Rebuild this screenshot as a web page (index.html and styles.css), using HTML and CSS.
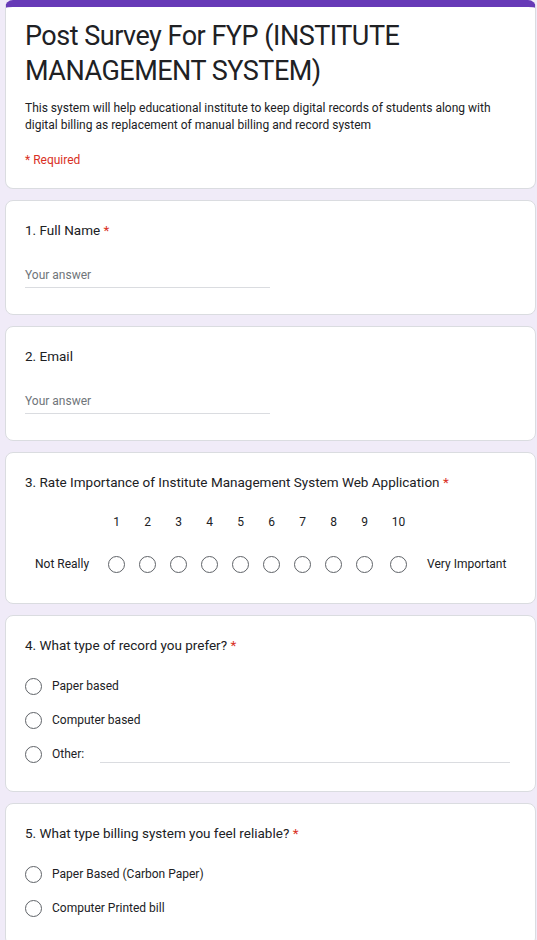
FILE: index.html
```html
<!DOCTYPE html>
<html lang="en">
<head>
<meta charset="utf-8">
<title>Post Survey For FYP (INSTITUTE MANAGEMENT SYSTEM)</title>
<link rel="stylesheet" href="styles.css">
</head>
<body>
<main class="form">
  <section class="card header-card">
    <h1 class="form-title">Post Survey For FYP (INSTITUTE MANAGEMENT SYSTEM)</h1>
    <p class="form-desc">This system will help educational institute to keep digital records of students along with digital billing as replacement of manual billing and record system</p>
    <p class="required-note">* Required</p>
  </section>

  <section class="card">
    <div class="question">1. Full Name <span class="star">*</span></div>
    <div class="text-input">Your answer</div>
  </section>

  <section class="card">
    <div class="question">2. Email</div>
    <div class="text-input">Your answer</div>
  </section>

  <section class="card scale-card">
    <div class="question">3. Rate Importance of Institute Management System Web Application <span class="star">*</span></div>
    <div class="scale">
      <div class="scale-label">Not Really</div>
      <div class="scale-cols">
        <div class="scale-col"><span class="num">1</span><span class="radio"></span></div>
        <div class="scale-col"><span class="num">2</span><span class="radio"></span></div>
        <div class="scale-col"><span class="num">3</span><span class="radio"></span></div>
        <div class="scale-col"><span class="num">4</span><span class="radio"></span></div>
        <div class="scale-col"><span class="num">5</span><span class="radio"></span></div>
        <div class="scale-col"><span class="num">6</span><span class="radio"></span></div>
        <div class="scale-col"><span class="num">7</span><span class="radio"></span></div>
        <div class="scale-col"><span class="num">8</span><span class="radio"></span></div>
        <div class="scale-col"><span class="num">9</span><span class="radio"></span></div>
        <div class="scale-col scale-col-wide"><span class="num">10</span><span class="radio"></span></div>
      </div>
      <div class="scale-label">Very Important</div>
    </div>
  </section>

  <section class="card options-card">
    <div class="question">4. What type of record you prefer? <span class="star">*</span></div>
    <div class="options">
      <div class="option"><span class="radio"></span><span class="option-text">Paper based</span></div>
      <div class="option"><span class="radio"></span><span class="option-text">Computer based</span></div>
      <div class="option"><span class="radio"></span><span class="option-text">Other:</span><span class="other-line"></span></div>
    </div>
  </section>

  <section class="card options-card">
    <div class="question">5. What type billing system you feel reliable? <span class="star">*</span></div>
    <div class="options">
      <div class="option"><span class="radio"></span><span class="option-text">Paper Based (Carbon Paper)</span></div>
      <div class="option"><span class="radio"></span><span class="option-text">Computer Printed bill</span></div>
    </div>
  </section>
</main>
</body>
</html>
```

FILE: styles.css
```css
html, body {
  margin: 0;
  padding: 0;
  background: #f0ebf8;
}

body {
  font-family: Roboto, "Liberation Sans", Arial, sans-serif;
  color: #202124;
}

.form {
  width: 531px;
  margin-left: 5px;
  display: flex;
  flex-direction: column;
  gap: 11px;
}

.card {
  background: #fff;
  border: 1px solid #dadce0;
  border-radius: 8px;
  padding: 19px 20px 26px 19px;
}

.header-card {
  border-top: 7px solid #673ab7;
  padding: 12px 20px 19px 19px;
}

.form-title {
  margin: 0;
  font-family: Roboto, "Open Sans", sans-serif;
  font-weight: 400;
  font-size: 27px;
  letter-spacing: -0.5px;
  line-height: 35px;
  color: #202124;
}

.form-desc {
  margin: 11px 0 0;
  font-size: 12px;
  line-height: 17px;
  color: #202124;
}

.required-note {
  margin: 18px 0 0;
  font-size: 12px;
  line-height: 17px;
  color: #d93025;
}

.question {
  font-family: Roboto, "Open Sans", sans-serif;
  font-size: 13.5px;
  line-height: 20px;
  color: #202124;
}

.star {
  color: #d93025;
}

.text-input {
  margin-top: 27px;
  width: 245px;
  padding-bottom: 3px;
  border-bottom: 1px solid #dadce0;
  font-size: 12px;
  line-height: 17px;
  color: #70757a;
}

.scale-card {
  padding-bottom: 30px;
}

.scale {
  margin-top: 22px;
  display: flex;
  align-items: flex-end;
  justify-content: space-between;
}

.scale-label {
  padding: 0 10px;
  font-size: 12px;
  line-height: 17px;
  white-space: nowrap;
  color: #202124;
}

.scale-cols {
  display: flex;
  margin-left: 2px;
}

.scale-col {
  width: 31px;
  display: flex;
  flex-direction: column;
  align-items: center;
  gap: 25px;
}

.scale-col-wide {
  width: 37px;
}

.num {
  font-size: 12px;
  line-height: 17px;
}

.radio {
  box-sizing: border-box;
  width: 17px;
  height: 17px;
  border: 1.5px solid #5f6368;
  border-radius: 50%;
  flex: none;
}

.options-card {
  padding-bottom: 20px;
}

.options {
  margin-top: 14px;
  display: flex;
  flex-direction: column;
}

.option {
  height: 34px;
  display: flex;
  align-items: center;
}

.option-text {
  margin-left: 10px;
  font-size: 12px;
  line-height: 17px;
  color: #202124;
}

.other-line {
  flex: 1;
  margin-left: 16px;
  margin-right: 5px;
  align-self: flex-end;
  margin-bottom: 8px;
  border-bottom: 1px solid #dadce0;
}
```
